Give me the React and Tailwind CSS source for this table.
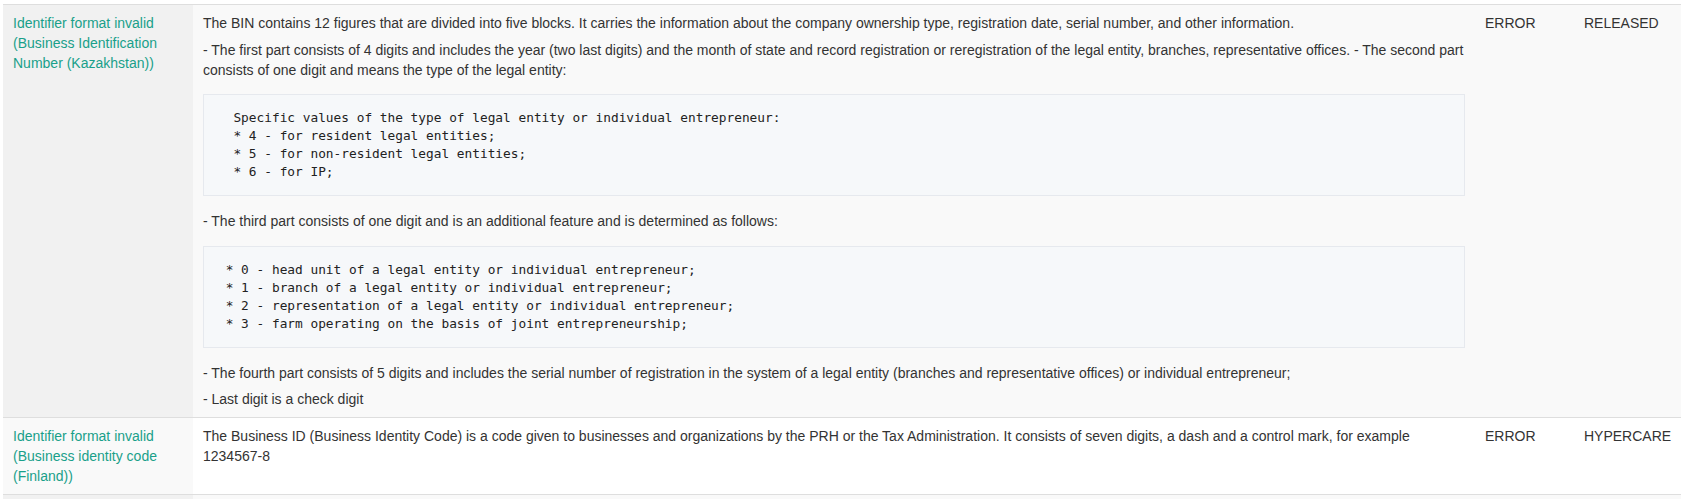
import React from "react";

const rows = [
  {
    name: "Identifier format invalid (Business Identification Number (Kazakhstan))",
    severity: "ERROR",
    status: "RELEASED",
    striped: true,
    body: "bin",
  },
  {
    name: "Identifier format invalid (Business identity code (Finland))",
    severity: "ERROR",
    status: "HYPERCARE",
    striped: false,
    body: "fi",
  },
];

const CodeBlock = ({ children, className = "" }) => (
  <pre
    className={`border border-[#e6e9ee] bg-[#f6f8fa] px-[14px] py-[14px] text-[12.8px] leading-[18px] text-[#222] font-['DejaVu_Sans_Mono',monospace] whitespace-pre ${className}`}
  >
    {children}
  </pre>
);

const BinBody = () => (
  <div>
    <p>
      The BIN contains 12 figures that are divided into five blocks. It carries the information about the company
      ownership type, registration date, serial number, and other information.
    </p>
    <p className="mt-[7px]">
      - The first part consists of 4 digits and includes the year (two last digits) and the month of state and record
      registration or reregistration of the legal entity, branches, representative offices. - The second part consists
      of one digit and means the type of the legal entity:
    </p>
    <CodeBlock className="mt-[14px]">
      {`  Specific values of the type of legal entity or individual entrepreneur:
  * 4 - for resident legal entities;
  * 5 - for non-resident legal entities;
  * 6 - for IP;`}
    </CodeBlock>
    <p className="mt-[15px]">
      - The third part consists of one digit and is an additional feature and is determined as follows:
    </p>
    <CodeBlock className="mt-[15px]">
      {` * 0 - head unit of a legal entity or individual entrepreneur;
 * 1 - branch of a legal entity or individual entrepreneur;
 * 2 - representation of a legal entity or individual entrepreneur;
 * 3 - farm operating on the basis of joint entrepreneurship;`}
    </CodeBlock>
    <p className="mt-[15px]">
      - The fourth part consists of 5 digits and includes the serial number of registration in the system of a legal
      entity (branches and representative offices) or individual entrepreneur;
    </p>
    <p className="mt-[6px]">- Last digit is a check digit</p>
  </div>
);

const FiBody = () => (
  <p>
    The Business ID (Business Identity Code) is a code given to businesses and organizations by the PRH or the Tax
    Administration. It consists of seven digits, a dash and a control mark, for example 1234567-8
  </p>
);

const Row = ({ row }) => (
  <div
    className={`grid grid-cols-[190px_1282px_99px_107px] border-b border-[#dedede] ${
      row.striped ? "bg-[#f9f9f9]" : "bg-white"
    }`}
  >
    <div className={`px-[10px] py-[8px] text-[#19a08a] ${row.striped ? "bg-[#f1f1f1]" : "bg-[#f9f9f9]"}`}>
      {row.name}
    </div>
    <div className="px-[10px] py-[8px]">{row.body === "bin" ? <BinBody /> : <FiBody />}</div>
    <div className="px-[10px] py-[8px]">{row.severity}</div>
    <div className="px-[10px] py-[8px]">{row.status}</div>
  </div>
);

export default function App() {
  return (
    <div className="bg-white pt-[4px] pl-[3px] h-[499px] overflow-hidden font-['Liberation_Sans',Arial,sans-serif] text-[14px] leading-[20px] text-[#333]">
      <div className="w-[1678px] border-t border-[#dedede]">
        {rows.map((r) => (
          <Row key={r.name} row={r} />
        ))}
        <div className="grid grid-cols-[190px_1282px_99px_107px] h-[40px] bg-[#f9f9f9]">
          <div className="bg-[#f1f1f1]" />
          <div />
          <div />
          <div />
        </div>
      </div>
    </div>
  );
}
